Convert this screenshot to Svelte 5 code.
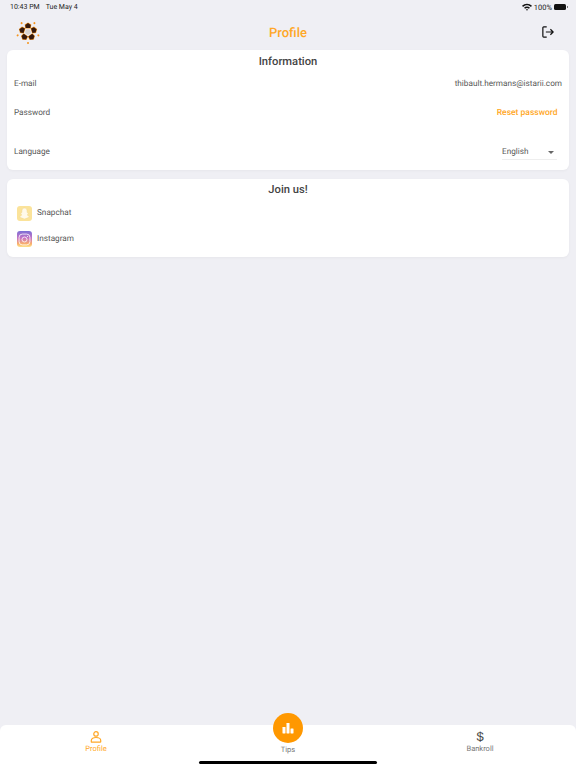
<script>
  const petals = [0, 72, 144, 216, 288];
  const dots = [36, 108, 180, 252, 324];
</script>

<div class="screen">
  <div class="status">
    <div class="status-left"><span>10:43 PM</span><span>Tue May 4</span></div>
    <div class="status-right">
      <svg width="10" height="8" viewBox="0 0 10 8">
        <path d="M0 2.800C2.800 0 7.200 0 10 2.800L8.900 3.900C6.700 1.800 3.300 1.800 1.100 3.900Z" fill="#111" />
        <path d="M2 4.700C3.700 3.100 6.300 3.100 8 4.700L6.900 5.800C5.800 4.800 4.200 4.800 3.100 5.800Z" fill="#111" />
        <path d="M3.900 6.500C4.500 6 5.500 6 6.100 6.500L5 7.800Z" fill="#111" />
      </svg>
      <span>100%</span>
      <div class="battery"><div class="battery-tip"></div></div>
    </div>
  </div>

  <header class="nav">
    <svg class="logo" width="24" height="24" viewBox="-13 -13 26 26">
      <circle r="3" fill="#d9d4d0" />
      {#each dots as a}
        <circle cx="0" cy="-11.800" r="1.100" fill="#f6941d" transform="rotate({a})" />
      {/each}
      {#each petals as a}
        <g transform="rotate({a})">
          <path d="M0 -10.400L3.600 -8L3 -3.800L-3 -3.800L-3.600 -8Z" fill="#f6941d" />
          <path d="M0 -9.800L3 -7.700L2.500 -4.300L-2.500 -4.300L-3 -7.700Z" fill="#35190c" />
        </g>
      {/each}
    </svg>
    <h1>Profile</h1>
    <svg class="logout" width="12" height="12" viewBox="0 0 14 14" fill="none" stroke="#111" stroke-width="1.400">
      <path d="M5.500 1H2A1 1 0 0 0 1 2V12A1 1 0 0 0 2 13H5.500" />
      <path d="M4.500 7H13M9.800 3.800L13 7L9.800 10.200" />
    </svg>
  </header>

  <section class="card info">
    <h2>Information</h2>
    <div class="row email"><span>E-mail</span><span>thibault.hermans@istarii.com</span></div>
    <div class="row password"><span>Password</span><span class="reset">Reset password</span></div>
    <div class="row language">
      <span>Language</span>
      <div class="select"><span>English</span><i class="caret"></i></div>
    </div>
  </section>

  <section class="card join">
    <h2>Join us!</h2>
    <div class="social">
      <div class="icon snap">
        <svg width="13" height="13" viewBox="0 0 12 12">
          <path d="M6 1C7.600 1 8.400 2.200 8.400 3.800V5L9.600 5.600C9.300 6.400 8.800 7 8.500 7.400C9 8.200 10 8.800 11 9C10.700 9.600 9.700 9.600 9 10C7.900 10.200 7.200 11 6 11S4.100 10.200 3 10C2.300 9.600 1.300 9.600 1 9C2 8.800 3 8.200 3.500 7.400C3.200 7 2.700 6.400 2.400 5.600L3.600 5V3.800C3.600 2.200 4.400 1 6 1Z" fill="#fff9ea" stroke="#eed68c" stroke-width=".4" />
        </svg>
      </div>
      <span>Snapchat</span>
    </div>
    <div class="social">
      <div class="icon insta">
        <svg width="13" height="13" viewBox="0 0 12 12" fill="none" stroke="#fff" stroke-width=".9" stroke-opacity=".8">
          <rect x="1" y="1" width="10" height="10" rx="3" />
          <circle cx="6" cy="6" r="2.300" />
          <circle cx="8.800" cy="3.200" r=".5" fill="#fff" stroke="none" />
        </svg>
      </div>
      <span>Instagram</span>
    </div>
  </section>

  <nav class="tabs">
    <div class="tab active">
      <svg width="12" height="12" viewBox="0 0 14 14" fill="none" stroke="#ffa726" stroke-width="1.400">
        <circle cx="7" cy="3.400" r="2.600" />
        <path d="M1.500 11C1.500 8.600 4 7.600 7 7.600S12.500 8.600 12.500 11V12.400C12.500 12.800 12.300 13 12 13H2C1.700 13 1.500 12.800 1.500 12.400Z" />
      </svg>
      <span>Profile</span>
    </div>
    <div class="tab center">
      <div class="fab">
        <svg width="12" height="12" viewBox="0 0 12 12" fill="#fff">
          <rect x="0.500" y="5" width="3" height="6.500" rx=".4" />
          <rect x="4.500" y="1" width="3" height="10.500" rx=".4" />
          <rect x="8.500" y="6.500" width="3" height="5" rx=".4" />
        </svg>
      </div>
      <span>Tips</span>
    </div>
    <div class="tab">
      <b class="dollar">$</b>
      <span>Bankroll</span>
    </div>
    <div class="home-bar"></div>
  </nav>
</div>

<style>
  :global(body) {
    margin: 0;
    background: #efeff4;
  }
  .screen {
    height: 768px;
    display: flex;
    flex-direction: column;
    background: #efeff4;
    font-family: Roboto, "Liberation Sans", sans-serif;
    text-rendering: geometricPrecision;
    color: #555;
    overflow: hidden;
  }
  .status {
    height: 14px;
    display: flex;
    justify-content: space-between;
    align-items: center;
    padding: 0 9px 0 10px;
    font-size: 7.500px;
    color: #222;
  }
  .status-left {
    display: flex;
    gap: 6px;
    font-size: 7px;
  }
  .status-right {
    display: flex;
    align-items: center;
    gap: 2px;
  }
  .battery {
    width: 12px;
    height: 6px;
    margin-right: 1px;
    border-radius: 1.500px;
    background: #111;
    position: relative;
  }
  .battery-tip {
    position: absolute;
    right: -1.500px;
    top: 2px;
    width: 1px;
    height: 2px;
    background: #777;
  }
  .nav {
    height: 36px;
    display: flex;
    align-items: center;
    justify-content: space-between;
    padding: 0 22px 0 16px;
    position: relative;
  }
  .nav h1 {
    position: absolute;
    left: 0;
    right: 0;
    top: 10px;
    text-align: center;
    margin: 2px 0 0;
    font-size: 13px;
    line-height: 16px;
    font-weight: 500;
    color: #ffa726;
  }
  .card {
    background: #fff;
    border-radius: 6px;
    margin: 0 7px;
    box-shadow: 0 1px 3px rgba(0, 0, 0, 0.04);
  }
  .card h2 {
    margin: 0;
    text-align: center;
    font-size: 11.200px;
    font-weight: 500;
    line-height: 14px;
    color: #444;
  }
  .info {
    height: 120px;
    padding-top: 5px;
    box-sizing: border-box;
  }
  .join {
    height: 78px;
    margin-top: 9px;
    padding-top: 4px;
    box-sizing: border-box;
  }
  .row {
    display: flex;
    justify-content: space-between;
    align-items: center;
    padding: 0 7px;
    font-size: 8.200px;
    line-height: 12px;
  }
  .email {
    margin-top: 9px;
  }
  .password {
    margin-top: 17px;
    padding-right: 11.500px;
  }
  .reset {
    color: #ffa726;
    font-size: 8.500px;
    font-weight: 500;
  }
  .language {
    margin-top: 24px;
    padding-right: 12px;
  }
  .select {
    width: 55px;
    height: 17px;
    display: flex;
    align-items: center;
    justify-content: space-between;
    box-sizing: border-box;
    padding: 2px 3px 0 0;
    border-bottom: 1px solid #eeeeee;
  }
  .caret {
    width: 0;
    height: 0;
    border-left: 3px solid transparent;
    border-right: 3px solid transparent;
    border-top: 3px solid #666;
  }
  .social {
    display: flex;
    align-items: center;
    gap: 5px;
    padding-left: 10px;
    height: 16px;
    margin-top: 10px;
    font-size: 8.200px;
  }
  .join h2 + .social {
    margin-top: 8px;
  }
  .icon {
    width: 15px;
    height: 15px;
    border-radius: 3px;
    display: flex;
    align-items: center;
    justify-content: center;
  }
  .snap {
    background: #fbe39a;
  }
  .insta {
    height: 16px;
    background: linear-gradient(180deg, #7a6fd6 0%, #c774c4 45%, #fbb06a 80%, #fde28a 100%);
  }
  .tabs {
    margin-top: auto;
    height: 43px;
    background: #fff;
    border-radius: 6px 6px 0 0;
    display: grid;
    grid-template-columns: repeat(3, 1fr);
    position: relative;
  }
  .tab {
    display: flex;
    flex-direction: column;
    align-items: center;
    justify-content: flex-start;
    padding-top: 5px;
    font-size: 7.500px;
    color: #777;
  }
  .tab span {
    line-height: 9px;
  }
  .tab svg {
    margin: 1px 0;
  }
  .tab.active {
    color: #ffa726;
  }
  .center {
    position: relative;
    padding-top: 20px;
  }
  .center .fab svg {
    margin: 0;
  }
  .fab {
    position: absolute;
    top: -12px;
    left: 50%;
    margin-left: -15px;
    width: 30px;
    height: 30px;
    border-radius: 50%;
    background: #ff9800;
    display: flex;
    align-items: center;
    justify-content: center;
  }
  .dollar {
    font-family: "Liberation Sans", sans-serif;
    font-size: 13px;
    line-height: 14px;
    font-weight: 400;
    color: #444;
  }
  .home-bar {
    position: absolute;
    left: 199px;
    bottom: 4px;
    width: 178px;
    height: 3px;
    border-radius: 2px;
    background: #000;
  }
</style>
